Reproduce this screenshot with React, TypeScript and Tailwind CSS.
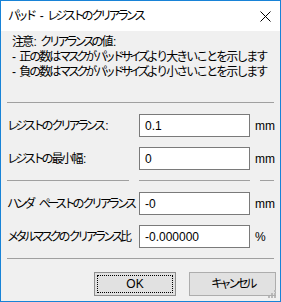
const FONT = "font-['Liberation_Sans','Noto_Sans_CJK_JP',sans-serif]"

// 文字種ごとに字送りを詰める（UI フォントの幅に合わせる）
function J({ t }: { t: string }) {
  const parts = t.match(/[\u30A0-\u30FF]+|[\u3040-\u309F\u4E00-\u9FFF]+|[^\u3040-\u30FF\u4E00-\u9FFF]+/g) ?? []
  return (
    <>
      {parts.map((p, i) => {
        const kata = /[\u30A0-\u30FF]/.test(p)
        const cjk = /[\u3040-\u309F\u4E00-\u9FFF]/.test(p)
        const prev = i > 0 ? parts[i - 1] : ''
        const afterKata = /[\u30A0-\u30FF]/.test(prev)
        const afterCjk = /[\u3040-\u309F\u4E00-\u9FFF]/.test(prev)
        let cls = 'tracking-normal whitespace-pre'
        if (kata) cls = 'tracking-[-3.4px]'
        else if (cjk) cls = 'tracking-[-2px]'
        else if (afterKata) cls = 'tracking-normal whitespace-pre ml-[2.5px]'
        else if (afterCjk) cls = 'tracking-normal whitespace-pre ml-[1.5px]'
        return <span key={i} className={cls}>{p}</span>
      })}
    </>
  )
}

function Sep() {
  return <div className="h-px bg-[#a0a0a0]" />
}

function Row({ label, value, unit, top }: { label: string; value: string; unit: string; top: string }) {
  return (
    <div className={`flex items-center h-[23px] ${top}`}>
      <div className="w-[121px] shrink-0 whitespace-nowrap">
        <J t={label} />
      </div>
      <div className="ml-[11px] w-[111px] h-[23px] shrink-0 border border-[#7a7a7a] bg-white flex items-center pl-[5px]">
        {value}
      </div>
      <div className="ml-[5px]">{unit}</div>
    </div>
  )
}

export default function App() {
  return (
    <div className={`relative w-[281px] h-[302px] overflow-hidden border border-[#1883d7] bg-[#f0f0f0] flex flex-col text-[12px] text-black ${FONT}`}>
      {/* タイトルバー */}
      <div className="h-[30px] shrink-0 bg-white flex items-center justify-between pl-[7px] pr-[9px]">
        <span className="whitespace-nowrap"><J t="パッド - レジストのクリアランス" /></span>
        <svg width="11" height="11" viewBox="0 0 11 11" className="text-black">
          <path d="M0.5 0.5 L10.5 10.5 M10.5 0.5 L0.5 10.5" stroke="currentColor" strokeWidth="1" />
        </svg>
      </div>

      {/* 本体 */}
      <div className="flex-1 flex flex-col px-[6px] pt-[4px]">
        <div className="pl-[5px] leading-[15px] whitespace-nowrap">
          <div><J t="注意: クリアランスの値:" /></div>
          <div><J t="- 正の数はマスクがパッドサイズより大きいことを示します" /></div>
          <div><J t="- 負の数はマスクがパッドサイズより小さいことを示します" /></div>
        </div>

        <div className="mt-[22px]"><Sep /></div>

        <Row top="mt-[11px]" label="レジストのクリアランス:" value="0.1" unit="mm" />
        <Row top="mt-[10px]" label="レジストの最小幅:" value="0" unit="mm" />

        <div className="mt-[10px] flex">
          <div className="w-[122px] h-px bg-[#a0a0a0]" />
          <div className="ml-[10px] w-[111px] h-px bg-[#a0a0a0]" />
          <div className="ml-[10px] flex-1 h-px bg-[#a0a0a0]" />
        </div>

        <Row top="mt-[11px]" label="ハンダ ペーストのクリアランス" value="-0" unit="mm" />
        <Row top="mt-[10px]" label="メタルマスクのクリアランス比" value="-0.000000" unit="%" />

        <div className="mt-[10px]"><Sep /></div>

        <div className="mt-[13px] -mr-[2px] flex justify-end gap-[13px]">
          <div className="relative w-[82px] h-[24px] border border-[#8f8f8f] bg-[#e1e1e1] flex items-center justify-center">
            <div className="absolute inset-[2px] border border-dotted border-black" />
            OK
          </div>
          <div className="w-[87px] h-[24px] border border-[#adadad] bg-[#e1e1e1] flex items-center justify-center">
            <J t="キャンセル" />
          </div>
        </div>
      </div>

      {/* サイズグリップ */}
      <svg width="10" height="10" viewBox="0 0 10 10" className="absolute right-[3px] bottom-[2px]">
        <rect x="7" y="1" width="2" height="2" fill="#b9b9b9" />
        <rect x="4" y="4" width="2" height="2" fill="#b9b9b9" />
        <rect x="7" y="4" width="2" height="2" fill="#b9b9b9" />
        <rect x="1" y="7" width="2" height="2" fill="#b9b9b9" />
        <rect x="4" y="7" width="2" height="2" fill="#b9b9b9" />
        <rect x="7" y="7" width="2" height="2" fill="#b9b9b9" />
      </svg>
    </div>
  )
}
